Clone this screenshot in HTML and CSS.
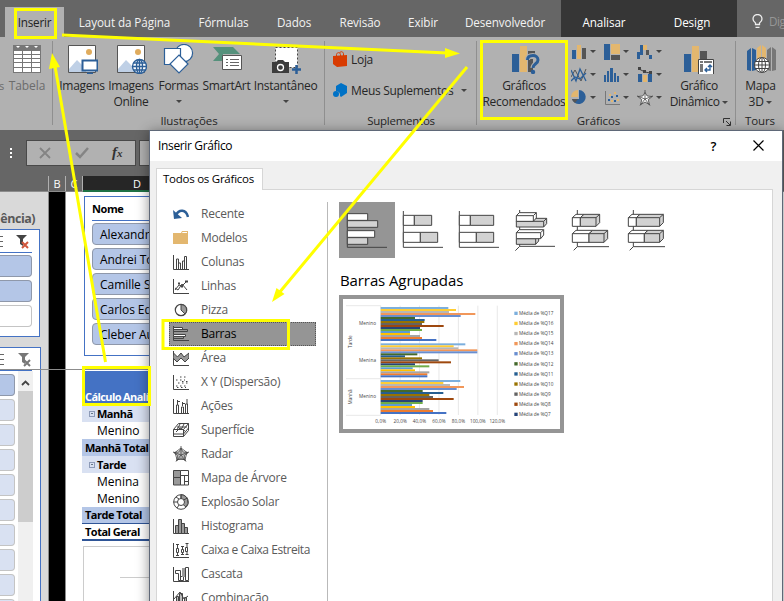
FILE: index.html
```
<!DOCTYPE html>
<html lang="pt-BR">
<head>
<meta charset="utf-8">
<title>Inserir Gráfico</title>
<link rel="stylesheet" href="styles.css">
</head>
<body>
<div class="app">
  <nav class="tabs">
    <span class="tab active">Inserir</span>
    <span class="tab t-layout">Layout da Página</span>
    <span class="tab t-form">Fórmulas</span>
    <span class="tab t-dados">Dados</span>
    <span class="tab t-rev">Revisão</span>
    <span class="tab t-exibir">Exibir</span>
    <span class="tab t-dev">Desenvolvedor</span>
    <span class="tab ctx t-anal">Analisar</span>
    <span class="tab ctx t-design">Design</span>
    <span class="tell"><svg width="11" height="15" viewBox="0 0 11 15" fill="none" stroke="#eee" stroke-width="1.3"><path d="M3.5 10.5V9C2 8 1 6.800 1 5a4.500 4.500 0 0 1 9 0c0 1.800-1 3-2.500 4v1.500zM3.500 13.300h4"/></svg><span>Dig</span></span>
  </nav>

  <section class="ribbon">
    <div class="group g-tab">
      <div class="tools">
        <span class="cut">s</span>
        <div class="big w-tabela dim"><svg width="30" height="30" viewBox="0 0 30 30"><path fill="#777" d="M1 1h28v28H1z"/><path fill="#fff" d="M2 7h8v3H2zm9 0h8v3h-8zm9 0h8v3h-8zM2 11h8v3H2zm9 0h8v3h-8zm9 0h8v3h-8zM2 15h8v3H2zm9 0h8v3h-8zm9 0h8v3h-8zM2 19h8v4H2zm9 0h8v4h-8zm9 0h8v4h-8zM2 24h8v4H2zm9 0h8v4h-8zm9 0h8v4h-8zM4 2h4L6 4zm9 0h4l-2 2zm9 0h4l-2 2z"/></svg><span>Tabela</span></div>
      </div>
      <div class="glabel"></div>
    </div>
    <div class="group g-ilus">
      <div class="tools">
        <div class="big w-img"><svg width="32" height="30" viewBox="0 0 32 30"><path d="M2.500 1.500h27v27h-27z" fill="#fff" stroke="#555"/><path fill="#bfd0e6" d="M3 25l8-9 9 9v3H3z"/><circle cx="23" cy="8" r="3" fill="#e0ac5d"/><path d="M16.500 16.500h15v10h-15z" fill="#fff" stroke="#2c5f98" stroke-width="2"/><path stroke="#2c5f98" stroke-width="2" d="M21 29.500h6"/></svg><span>Imagens</span></div>
        <div class="big w-online"><svg width="32" height="30" viewBox="0 0 32 30"><path d="M2.500 1.500h27v27h-27z" fill="#fff" stroke="#555"/><path fill="#bfd0e6" d="M3 25l8-9 9 9v3H3z"/><circle cx="23" cy="8" r="3" fill="#e0ac5d"/><g fill="#fff" stroke="#2c5f98" stroke-width="1.400"><circle cx="24.500" cy="22.500" r="7"/><ellipse cx="24.500" cy="22.500" rx="3" ry="7"/><path d="M17.500 22.500h14M18.500 19h12M18.500 26h12M24.500 15.500v14"/></g></svg><span>Imagens</span><span>Online</span></div>
        <div class="big w-formas"><svg width="32" height="30" viewBox="0 0 32 30" fill="#fff" stroke="#2c5f98" stroke-width="1.200"><circle cx="21" cy="9" r="8.600"/><path d="M1.500 4.500h16v16h-16z"/><path d="M16 11l9 9-9 9-9-9z"/></svg><span>Formas</span><i class="dd"></i></div>
        <div class="big w-smart"><svg width="32" height="30" viewBox="0 0 32 30"><path fill="#55917c" d="M2 3h20l7 7H12v7H2l6-7z"/><path d="M11.500 11.500h19v14h-19z" fill="#fff" stroke="#555"/><path stroke="#666" d="M15 15.500h2m2 0h9M15 18.500h2m2 0h9M15 21.500h2m2 0h9"/></svg><span>SmartArt</span></div>
        <div class="big w-inst"><svg width="32" height="30" viewBox="0 0 32 30"><path d="M5.500 3.500h22v20h-22z" fill="#fff" stroke="#444" stroke-dasharray="2 2"/><path fill="#3c3c3c" d="M2 18h4l2-2h5l2 2h4v11H2z"/><circle cx="10.500" cy="23.500" r="3" fill="#3c3c3c" stroke="#fff" stroke-width="1.300"/><path stroke="#2c5f98" stroke-width="2.500" d="M22 25.500h9M26.500 21v9"/></svg><span>Instantâneo</span><i class="dd"></i></div>
      </div>
      <div class="glabel">Ilustrações</div>
    </div>
    <div class="group g-sup">
      <div class="rows">
        <div class="line"><svg width="15" height="17" viewBox="0 0 15 17"><path fill="#d83b01" d="M0 5l14-1v11l-10 1-4-3z"/><path d="M3.500 6V3.500C4 1 7 1 7.500 3.500V6M6.500 2C8-.5 10.500 1 10.500 3v2" fill="none" stroke="#d83b01"/></svg><span>Loja</span></div>
        <div class="line"><svg width="15" height="17" viewBox="0 0 15 17"><path fill="#0072c6" d="M3 4l5-3 6 3v7l-6 4-1-1a4 4 0 0 0-4-5z"/><circle cx="3" cy="12" r="3" fill="#0072c6"/></svg><span>Meus Suplementos</span><i class="dd"></i></div>
      </div>
      <div class="glabel">Suplementos</div>
    </div>
    <div class="group g-graf">
      <div class="tools">
        <div class="big w-rec"><svg width="32" height="30" viewBox="0 0 32 30"><path fill="#2c5f98" d="M4 10h7v18H4z"/><path fill="#e3b76f" d="M12 2h7v26h-7z"/><path fill="#555" d="M20 7h7v5h-7zm0 8h5v13h-5z"/><path d="M19.500 16c0-4 3-4.500 5.500-4.500s5 1.500 5 4.500c0 4-5 3.500-5 8" fill="none" stroke="#b1b1b1" stroke-width="5"/><path d="M19.500 16c0-4 3-4.500 5.500-4.500s5 1.500 5 4.500c0 4-5 3.500-5 8" fill="none" stroke="#2c5f98" stroke-width="3"/><circle cx="25" cy="28" r="2.200" fill="#2c5f98"/></svg><span>Gráficos</span><span>Recomendados</span></div>
        <div class="minis">
          <div><svg width="16" height="16" viewBox="0 0 16 16"><path fill="#2c5f98" d="M1 6h4v9H1z"/><path fill="#e3b76f" d="M6 1h4v14H6z"/><path fill="#555" d="M11 4h4v11h-4z"/></svg><i class="dd"></i></div>
          <div><svg width="16" height="16" viewBox="0 0 16 16"><path fill="#2c5f98" d="M0 0h6v16H0z"/><path fill="#e3b76f" d="M7 0h9v10H7z"/><path fill="#555" d="M7 11h9v5H7z"/></svg><i class="dd"></i></div>
          <div><svg width="16" height="16" viewBox="0 0 16 16"><path fill="#2c5f98" d="M0 8h3v7H0zM3 1h3v10H3zm9 10h3v4h-3z"/><path fill="#e3b76f" d="M6 1h4v5H6z"/><path fill="#555" d="M9 6h3v5H9z"/></svg><i class="dd"></i></div>
          <div><svg width="16" height="16" viewBox="0 0 16 16" fill="none"><path stroke="#555" d="M0 10l4-7 6 11 5-12"/><path stroke="#2c5f98" stroke-width="1.300" d="M0 3l5 11L9 2l6 12M0 14l4-4 5 2 6-6"/></svg><i class="dd"></i></div>
          <div><svg width="16" height="16" viewBox="0 0 16 16"><path fill="#2c5f98" d="M0 8h2v7H0zm3-4h2v11H3zm3-3h3v14H6zm4 5h2v9h-2zm3 3h2v6h-2z"/></svg><i class="dd"></i></div>
          <div><svg width="16" height="16" viewBox="0 0 16 16"><path fill="#2c5f98" d="M1 7h4v8H1zm10 0h4v8h-4z"/><path fill="#e3b76f" d="M6 8h4v7H6z"/><path d="M2 2l6 3 5 1" fill="none" stroke="#444"/><path fill="#444" d="M1 0h3v3H1zm5 3h3v3H6zm6 1h3v3h-3z"/></svg><i class="dd"></i></div>
          <div><svg width="16" height="16" viewBox="0 0 16 16"><path fill="#2c5f98" d="M8 0a7 7 0 1 1-7 9h7z"/><path fill="#e3b76f" d="M7 0v7H0a7 7 0 0 1 7-7z"/><path fill="#555" d="M1 9h6l-3 4a6 6 0 0 1-3-4z"/></svg><i class="dd"></i></div>
          <div><svg width="16" height="16" viewBox="0 0 16 16"><path d="M1.500 1v13.500H16" fill="none" stroke="#777"/><path fill="#2c5f98" d="M4 9h2v2H4zm3-3h2v2H7zm3 4h2v2h-2zm2-5h2v2h-2z"/><path fill="#e3b76f" d="M5 4h2v2H5zm5-2h2v2h-2zm-3 8h2v2H7zm6-1h2v2h-2z"/></svg><i class="dd"></i></div>
          <div><svg width="16" height="16" viewBox="0 0 16 16" fill="none" stroke="#444" stroke-width=".8"><path fill="#fff" d="M8 2.500l2.200 3.500 5 .5-4 3.200 1.300 5L8 12l-4.500 2.700 1.300-5-4-3.200 5-.5z"/><path d="M8 0v9M0 6l8 3 8-3M3 15.500L8 9l5 6.500"/></svg><i class="dd"></i></div>
        </div>
        <div class="big w-din"><svg width="32" height="30" viewBox="0 0 32 30"><path fill="#2c5f98" d="M1 10h7v18H1z"/><path fill="#e3b76f" d="M9 2h7v26H9z"/><path fill="#555" d="M17 7h7v8h-7z"/><path d="M15.500 15.500h15v15h-15z" fill="#fff" stroke="#444"/><path fill="#777" d="M17 17h3v2h-3zm4 0h8v2h-8zm-4 3h3v8h-3z"/><path d="M22 26h5v-5M24 24l-2 2 2 2M25 23l2-2 2 2" fill="none" stroke="#2c5f98" stroke-width="1.400"/></svg><span>Gráfico</span><span>Dinâmico <i class="dd"></i></span></div>
      </div>
      <div class="glabel"><span>Gráficos</span><svg class="launch" width="8" height="8" viewBox="0 0 8 8" fill="none" stroke="#333"><path d="M.5 5V.5H7M3 3l4 4M7.500 3.500v4h-4"/></svg></div>
    </div>
    <div class="group g-tour">
      <div class="tools"><div class="big w-mapa"><svg width="32" height="30" viewBox="0 0 32 30"><path fill="#2c5f98" d="M2 7l4-3v23l-4-1zm5-3l4 2v20l-4 1z"/><path fill="#e3b76f" d="M12 4l4-3v25h-4zm5-3l4 3v22h-4z"/><path fill="#777" d="M22 6l4-3v24l-4-1zm5-3l4 3v20l-4 1z"/><g fill="#fff" stroke="#444"><circle cx="17" cy="21" r="7.500"/><ellipse cx="17" cy="21" rx="3.500" ry="7.500"/><path d="M9.500 21h15M11 17.500h12M11 24.500h12M17 13.500v15"/></g></svg><span>Mapa</span><span>3D <i class="dd"></i></span></div></div>
      <div class="glabel">Tours</div>
    </div>
  </section>

  <section class="fbar">
    <span class="dots"><b></b><b></b><b></b></span>
    <div class="fbox"><svg width="12" height="12" viewBox="0 0 12 12" stroke="#848484" stroke-width="1.800"><path d="M1 1l10 10M11 1L1 11"/></svg><svg width="14" height="12" viewBox="0 0 14 12" fill="none" stroke="#848484" stroke-width="2.500"><path d="M1 6l4 4 8-9"/></svg><span class="fx">f<small>x</small></span></div>
    <div class="fin"></div>
  </section>
  <div class="cols"><span class="ca"></span><span class="cb">B</span><span class="cc">C</span><span class="cd">D</span></div>

  <main class="sheet">
    <aside class="left">
      <div class="cap">ência)</div>
      <div class="slicer s1">
        <div class="shead"><svg width="32" height="18" viewBox="0 0 32 18"><path stroke="#666" d="M0 4.500h3M0 9.500h3M0 14.500h3"/><path fill="#444" d="M16 3h11l-4 4v7l-3-2V7z"/><path stroke="#d0563c" stroke-width="2" d="M22 10l6 6M28 10l-6 6"/></svg></div>
        <div class="pill"></div><div class="pill"></div><div class="pill off"></div>
      </div>
      <div class="slicer s2">
        <div class="shead"><svg width="32" height="18" viewBox="0 0 32 18"><path stroke="#666" d="M0 4.500h4M0 9.500h4M0 14.500h4"/><path fill="#777" d="M18 3h11l-4 4v7l-3-2V7z"/><path stroke="#777" stroke-width="2" d="M24 10l6 6M30 10l-6 6"/></svg></div>
        <div class="sbody">
          <div class="pills"><div class="pill"></div><div class="pill lt"></div><div class="pill lt"></div><div class="pill lt"></div><div class="pill lt"></div><div class="pill lt"></div><div class="pill lt"></div><div class="pill lt"></div><div class="pill lt"></div><div class="pill lt"></div></div>
          <div class="scroll"><svg width="9" height="6" viewBox="0 0 9 6" fill="none" stroke="#444" stroke-width="1.800"><path d="M1 5l3.500-3.500L8 5"/></svg><div class="thumb"></div></div>
        </div>
      </div>
    </aside>
    <div class="black"></div>
    <div class="blank"></div>
    <div class="dcol">
      <div class="names"><div class="nh">Nome</div><div class="np">Alexandre</div><div class="np">Andrei Tom</div><div class="np">Camille Sa</div><div class="np">Carlos Edu</div><div class="np">Cleber Aug</div></div>
      <div class="pivot">
        <div class="ph">Cálculo Analítico</div>
        <div class="pr sub"><i class="minus"></i>Manhã</div>
        <div class="pr in">Menino</div>
        <div class="pr tot">Manhã Total</div>
        <div class="pr sub"><i class="minus"></i>Tarde</div>
        <div class="pr in">Menina</div>
        <div class="pr in">Menino</div>
        <div class="pr tot ul">Tarde Total</div>
        <div class="pr gt">Total Geral</div>
      </div>
      <div class="obj"><div></div></div>
    </div>
  </main>

  <div class="freeze"></div>

  <section class="dialog">
    <header><span>Inserir Gráfico</span><span class="q">?</span><svg width="11" height="11" viewBox="0 0 11 11" stroke="#000" stroke-width="1.200"><path d="M.5.5l10 10M10.500.5l-10 10"/></svg></header>
    <div class="dbody">
      <div class="dtab">Todos os Gráficos</div>
      <div class="panel">
        <ul class="list">
          <li><svg viewBox="0 0 16 16"><path d="M3 9c3-6 10-6 12 2" fill="none" stroke="#2c5f98" stroke-width="2.500"/><path fill="#2c5f98" d="M0 4l1 9 8-1z"/></svg>Recente</li>
          <li><svg viewBox="0 0 16 16"><path fill="#e3b76f" d="M0 3h8l1-2h6v13H0z"/><path fill="#fff" d="M9.500 2H14v1H9z"/></svg>Modelos</li>
          <li><svg viewBox="0 0 16 16" class="ic"><path d="M.5 1v14.500H16M3.500 15V5h2v10M5.500 15V9h2v6M9.500 15V7h2v8M11.500 15V2.500h2V15"/></svg>Colunas</li>
          <li><svg viewBox="0 0 16 16" class="ic"><path d="M.5 1v14.500H16M2 12l4-5 3 1 5-5M2 10l3 2 4-6 5 6"/><path d="M5 5.500h2M8 8.500h2M12 3.500h3" stroke-width="2"/></svg>Linhas</li>
          <li><svg viewBox="0 0 16 16"><circle cx="8" cy="8" r="5.700" fill="#fff" stroke="#444" stroke-width="1.200"/><path fill="#999" stroke="#444" d="M8 2.500a5.500 5.500 0 0 1 4 9.500L8 8z"/></svg>Pizza</li>
          <li class="sel"><svg viewBox="0 0 16 16" class="ic"><path d="M.5 0v14.500H16"/><path fill="#fff" d="M.5 1.500h9v2h-9z"/><path d="M.5 3.500h14v2H.5zM.5 10.500h10v2H.5z"/><path fill="#fff" d="M.5 8.500h12v2H.5z"/></svg>Barras</li>
          <li><svg viewBox="0 0 16 16" class="ic"><path d="M.5 1v14.500H16"/><path fill="#999" d="M.5 3l4 4L8 3l3 4 5-4v5l-4 4-4-4-4 4-4-4z"/></svg>Área</li>
          <li><svg viewBox="0 0 16 16" class="ic"><path d="M.5 1v14.500H16"/><path stroke-dasharray="1.500 2.500" d="M3 12h11M5 9h10M3 6h9M7 3h8M4 13.500h9M9 7.500h6"/></svg>X Y (Dispersão)</li>
          <li><svg viewBox="0 0 16 16" class="ic"><path d="M.5 1v14.500H16M3.500 15V7h2v8M8.500 15V9h2v6M12.500 15V6h2v9M4.500 2v5M9.500 4v4M14 1v5M4.500 3.500H7M9.500 5.500H12"/></svg>Ações</li>
          <li><svg viewBox="0 0 16 16" class="ic"><path fill="#fff" d="M5.500 1.500h10v7l-5 6H.5v-7z"/><path d="M.5 7.500h10l5-6M10.500 7.500v7M4 5h10M7 2L4 8M11 2L8 8M.5 12h10l5-6M3 10l4-4 5 3"/></svg>Superfície</li>
          <li><svg viewBox="0 0 16 16" class="ic thin"><path fill="#bbb" d="M8 2.500l2.200 3.500 5 .5-4 3.200 1.300 5L8 12l-4.500 2.700 1.300-5-4-3.200 5-.5z"/><path d="M8 0v9M0 6l8 3 8-3M3 15.500L8 9l5 6.500M8 2L2 6.500l2 7h8l2-7z"/></svg>Radar</li>
          <li><svg viewBox="0 0 16 16" class="ic"><path fill="#999" d="M.5.5h7v7h-7zM.5 7.500h7v7.500h-7z"/><path fill="#fff" d="M7.500.5h8v5h-8zM7.500 5.500h4V15h-4zM11.500 5.500h4v6h-4zM11.500 11.500h4V15h-4z"/></svg>Mapa de Árvore</li>
          <li><svg viewBox="0 0 16 16" class="ic"><circle cx="8" cy="8" r="7.300" fill="#fff"/><path fill="#999" d="M8 .7A7.300 7.300 0 0 1 13 13L9.500 10A3 3 0 0 0 8 5z"/><circle cx="8" cy="8" r="3.500" fill="#fff"/><path d="M4.500 8h-4M6 11l-2 3M8 4.500V1M3 3l3 2M10.500 6l4-2"/></svg>Explosão Solar</li>
          <li><svg viewBox="0 0 16 16" class="ic"><path d="M.5 1v14.500H16"/><path fill="#999" d="M2.500 7.500h3v8h-3zM5.500 1.500h3v14h-3zM8.500 5.500h3v10h-3zM11.500 9.500h3v6h-3z"/></svg>Histograma</li>
          <li><svg viewBox="0 0 16 16" class="ic"><path d="M.5 1v14.500H16M4.500 2v12M9.500 4v9M14 1v12M3 2.500h3M8 4.500h3M12.500 1.500h3M3 13.500h3M8 12.500h3M12.500 12.500h3"/><path fill="#fff" d="M3.500 6.500h2v4h-2zM8.500 7.500h2v3h-2zM12.500 5.500h2v4h-2z"/></svg><span class="tight">Caixa e Caixa Estreita</span></li>
          <li><svg viewBox="0 0 16 16" class="ic"><path d="M.5 1v14.500H16"/><path d="M2.500 4.500h5v10h-2v-7h-3zM7.500 10.500h3v4h-3zM12.500 1.500h3v13h-3z"/><path fill="#999" stroke="none" d="M9 2h3v9H9z"/></svg>Cascata</li>
          <li><svg viewBox="0 0 16 16" class="ic"><path d="M.5 1v14.500H16"/><path fill="#bbb" d="M3.500 6.500h2v9h-2zM6.500 3.500h3v12h-3zM11.500 7.500h2v8h-2z"/><path d="M1 9l6-7 4 7 4-3"/></svg>Combinação</li>
        </ul>
        <div class="content">
          <div class="thumbs">
            <div class="on"><svg viewBox="0 0 168 168"><path d="M25 33v103h119"/><path class="w" d="M25 35h61v20H25zM25 86h82v20H25z"/><path class="g" d="M25 56h91v20H25zM25 107h61v20H25z"/></svg></div>
            <div><svg viewBox="0 0 168 168"><path d="M25 27v109h119"/><path class="w" d="M25 40h33v30H25zM25 91h51v30H25z"/><path class="g" d="M58 40h52v30H58zM76 91h52v30H76z"/></svg></div>
            <div><svg viewBox="0 0 168 168"><path d="M25 27v109h119"/><path class="w" d="M25 40h33v30H25zM25 91h51v30H25z"/><path class="g" d="M58 40h70v30H58zM76 91h52v30H76z"/></svg></div>
            <div><svg viewBox="0 0 168 168"><path d="M38 24v109h106M38 133l-13 13"/><path class="g" d="M28 58l9-9h82v16l-9 10H28zM110 58l9-9M28 58h82v17M28 110l9-9h58v16l-9 10H28zM28 110h58v17M86 110l9-9"/><path class="w" d="M28 41l9-9h51v16l-9 10H28zM28 41h51v17M79 41l9-9M28 92l9-9h73v16l-9 11H28zM28 92h73v18M101 92l9-9"/></svg></div>
            <div><svg viewBox="0 0 168 168"><path d="M43 24v110h95M43 134l-11 11"/><path class="w" d="M28 47l11-10h24L52 47v26H28zM28 47h24M28 95l11-10h50L78 95v26H28zM28 95h50"/><path class="g" d="M52 47l11-10h47v25l-11 11H52zM52 47h47v26M99 47l11-10M78 95l11-10h45v25l-11 11H78zM78 95h45v26M123 95l11-10"/></svg></div>
            <div><svg viewBox="0 0 168 168"><path d="M43 24v110h95M43 134l-11 11"/><path class="w" d="M28 47l11-10h24L52 47v26H28zM28 47h24M28 95l11-10h48L76 95v26H28zM28 95h48"/><path class="g" d="M52 47l11-10h70v25l-11 11H52zM52 47h70v26M122 47l11-10M76 95l11-10h46v25l-11 11H76zM76 95h46v26M122 95l11-10"/></svg></div>
          </div>
          <h2>Barras Agrupadas</h2>
          <div class="preview"><svg id="chart" width="217" height="130" viewBox="39 102 651 390"></svg></div>
        </div>
      </div>
    </div>
  </section>

  <svg class="marks" width="784" height="601" viewBox="0 0 784 601" fill="none" stroke="#ff0" stroke-width="3">
    <path d="M15.500 9.500h40v28h-40zM481.500 41.500h85v77h-85zM163 320.500h125.500v28H163zM83.500 367.500h66v37h-66z"/>
    <path d="M62 35L447 53M467 67L279 293M105.500 362L55 66"/>
    <path fill="#ff0" stroke="none" d="M460 53.500l-15 4.500V48zM272 302l4.500-14 8 6zM52 53l8 14-11 2z"/>
  </svg>
</div>
<script src="chart.js"></script>
</body>
</html>
```
FILE: styles.css
```
* { box-sizing: border-box; }
body { margin: 0; font: 12px/16px "Open Sans", "Noto Sans", sans-serif; color: #262626; }
.app { position: relative; width: 784px; height: 601px; overflow: hidden; background: #666; display: flex; flex-direction: column; }
svg { display: block; flex: none; }
.tabs { height: 37px; flex: none; display: flex; align-items: flex-end; background: #666; color: #f2f2f2; padding-left: 5px; font-size: 11.7px; letter-spacing: -.1px; white-space: nowrap; }
.tab { height: 30px; line-height: 30px; text-align: center; flex: none; }
.active { width: 59px; background: #b1b1b1; color: #222; letter-spacing: -.2px; }
.t-layout { width: 121px; }
.t-form { width: 77px; }
.t-dados { width: 64px; }
.t-rev { width: 68px; }
.t-exibir { width: 58px; }
.t-dev { width: 109px; padding-right: 3px; }
.ctx { height: 37px; padding-top: 7px; background: #363636; color: #fff; }
.t-anal { width: 86px; }
.t-design { width: 90px; }
.tell { display: flex; align-items: center; gap: 6px; height: 30px; padding: 0 0 2px 15px; color: #969696; width: 47px; overflow: hidden; letter-spacing: -.5px; }
.ribbon { height: 93px; flex: none; background: #b1b1b1; display: flex; }
.group { height: 93px; flex: none; display: flex; flex-direction: column; background: linear-gradient(#8f8f8f, #8f8f8f) right 4px / 1px 84px no-repeat; white-space: nowrap; letter-spacing: -.3px; }
.g-tab { width: 53px; }
.g-ilus { width: 272px; }
.g-sup { width: 152px; }
.g-graf { width: 259px; }
.g-tour { width: 48px; background: none; }
.tools, .rows { height: 76px; display: flex; }
.glabel { height: 17px; line-height: 16px; display: flex; justify-content: center; position: relative; font-size: 11.5px; letter-spacing: -.1px; }
.g-sup .glabel { letter-spacing: -.25px; }
.launch { position: absolute; right: 5px; top: 5px; }
.g-graf .glabel { padding-right: 16px; }
.big { display: flex; flex-direction: column; align-items: center; padding-top: 7px; flex: none; }
.big > svg { margin-bottom: 4px; }
.big span { line-height: 16px; }
.dim { color: #6c6c6c; letter-spacing: -.1px; }
.cut { width: 4px; padding-top: 41px; color: #6c6c6c; direction: rtl; font-size: 11px; }
.w-tabela { width: 46px; }
.g-ilus .tools { padding-left: 5px; }
.w-img { width: 48px; }
.w-online { width: 50px; }
.w-formas { width: 45px; }
.w-smart { width: 51px; }
.w-inst { width: 67px; }
.w-rec { width: 94px; }
.w-din { width: 58px; letter-spacing: -.4px; }
.w-mapa { width: 49px; }
.dd { display: inline-block; width: 0; height: 0; border: 3px solid transparent; border-top-color: #444; border-bottom: 0; vertical-align: 2px; flex: none; }
.big > .dd { margin-top: 6px; }
.rows { flex-direction: column; padding: 7px 0 0 8px; }
.line { height: 31px; display: flex; align-items: center; gap: 3px; }
.line .dd { margin-left: 5px; }
.minis { display: grid; grid-template-columns: repeat(3, 33px); grid-template-rows: repeat(3, 23px); padding-top: 3px; width: 99px; }
.minis div { display: flex; align-items: center; gap: 3px; }
.fbar { height: 46px; flex: none; display: flex; align-items: flex-start; padding-top: 10px; }
.dots { width: 26px; display: flex; flex-direction: column; gap: 2px; padding: 8px 0 0 10px; }
.dots b { width: 2px; height: 2px; background: #fff; }
.fbox { width: 110px; height: 26px; background: #b1b1b1; border: 1px solid #494949; display: flex; align-items: center; padding-left: 12px; gap: 24px; }
.fx { font: italic bold 15px "Liberation Serif", serif; color: #333; margin: -2px 0 0 -1px; }
.fx small { font-size: 11px; }
.fin { width: 100px; height: 26px; margin-left: 3px; background: #b1b1b1; border: 1px solid #494949; }
.cols { height: 16px; flex: none; display: flex; color: #fff; line-height: 15px; text-align: center; border-bottom: 1px solid #8c8c8c; font-size: 11px; }
.cols span { border-right: 1px solid #b0b0b0; flex: none; }
.ca { width: 49px; }
.cb { width: 17px; }
.cc { width: 17px; }
.cols .cd { width: 109px; height: 16px; background: #262626; border-bottom: 2px solid #1f7245; }
.sheet { flex: 1; display: flex; background: #fff; min-height: 0; }
.left { width: 49px; flex: none; background: #d9d9d9; border-right: 1px solid #8c8c8c; overflow: hidden; }
.cap { height: 37px; padding-top: 18px; font-weight: bold; font-size: 12.5px; line-height: 18px; color: #595959; width: 35px; display: flex; justify-content: flex-end; white-space: nowrap; letter-spacing: -.5px; }
.slicer { background: #fff; border: 1px solid #4472c4; border-left: 0; }
.s1 { width: 40px; height: 108px; }
.shead { width: 32px; height: 23px; border-bottom: 1px solid #4472c4; padding-top: 2px; }
.s1 .pill { width: 32px; }
.pill { height: 22px; margin: 2px 0 3px; border: 1px solid #8f98aa; border-left: 0; border-radius: 0 4px 4px 0; background: #b4c6e7; }
.pill.off { background: #fff; border-color: #c4c4c4; }
.pill.lt { background: #d9e1f2; border-color: #c4c4c4; }
.s2 { width: 41px; height: 300px; margin-top: 10px; }
.sbody { display: flex; }
.pills { width: 15px; padding-top: 1px; }
.scroll { width: 15px; margin-left: 3px; background: #f0f0f0; display: flex; flex-direction: column; align-items: center; padding-top: 9px; }
.thumb { width: 15px; height: 131px; margin-top: 5px; background: #cdcdcd; flex: none; }
.black { width: 17px; flex: none; background: #000; border-right: 1px solid #8c8c8c; }
.blank { width: 16px; flex: none; }
.dcol { width: 110px; flex: none; white-space: nowrap; color: #000; }
.names { margin: 4px 0 0 2px; height: 160px; border: 1px solid #4472c4; padding-left: 7px; }
.nh { height: 24px; line-height: 23px; font-weight: bold; font-size: 11px; border-bottom: 1px solid #4472c4; margin-bottom: 2px; letter-spacing: -.4px; }
.np { height: 22px; line-height: 21px; margin-bottom: 3px; border: 1px solid #8f98aa; border-radius: 4px; background: #b4c6e7; padding-left: 7px; letter-spacing: -.05px; }
.pivot { margin-top: 15px; font-size: 11px; font-weight: bold; letter-spacing: -.5px; }
.ph { height: 34px; background: #4472c4; color: #fff; padding: 17px 0 0 3px; line-height: 17px; letter-spacing: -.6px; }
.pr { height: 17px; line-height: 16px; padding-left: 3px; display: flex; align-items: center; }
.sub { background: #d9e1f2; padding-left: 7px; }
.in { font-weight: normal; padding-left: 15px; letter-spacing: 0; font-size: 12px; }
.tot { background: #b4c6e7; }
.ul { border-bottom: 1px solid #2f5597; }
.gt { border-bottom: 2px solid #2f5597; }
.minus { width: 6px; height: 6px; border: 1px solid #8d9bb8; margin-right: 2px; background: linear-gradient(#678, #678) center / 2px 1px no-repeat; }
.obj { margin: 5px 0 0 1px; height: 70px; border: 1px solid #ccc; padding: 30px 0 0 36px; }
.obj div { border-top: 1px solid #ccc; }
.freeze { position: absolute; left: 0; top: 369px; width: 150px; height: 1px; background: #8c8c8c; }
.dialog { position: absolute; left: 149px; top: 130px; width: 634px; height: 486px; background: #f0f0f0; border: 1px solid #5f6878; border-width: 1px 1px 0; box-shadow: 0 2px 12px rgba(0, 0, 0, .45); display: flex; flex-direction: column; color: #000; }
.dialog header { height: 30px; flex: none; background: #fff; display: flex; align-items: center; padding: 0 18px 1px 8px; letter-spacing: -.35px; }
.q { margin-left: auto; margin-right: 37px; font-size: 13px; font-weight: 600; }
.dbody { padding: 7px 9px 0 6px; flex: 1; display: flex; flex-direction: column; }
.dtab { width: 107px; height: 22px; line-height: 20px; margin-bottom: -1px; position: relative; z-index: 1; background: #fff; border: 1px solid #d6d6d6; border-bottom: 0; padding-left: 6px; font-size: 11.5px; letter-spacing: -.25px; white-space: nowrap; }
.panel { flex: 1; background: #fff; border: 1px solid #d6d6d6; display: flex; padding-top: 12px; }
.list { list-style: none; margin: 0; padding: 0 11px 0 12px; width: 171px; flex: none; border-right: 1px solid #b9b9b9; font-size: 12px; letter-spacing: -.25px; color: #5a5a5a; }
.list li { height: 24px; display: flex; align-items: center; gap: 12px; padding-left: 4px; white-space: nowrap; }
.tight { letter-spacing: -.45px; }
.list svg { width: 16px; height: 16px; }
.list .sel { background: #959595; color: #000; outline: 1px dotted #555; outline-offset: -1px; }
.ic { fill: none; stroke: #444; stroke-width: 1; }
.thin { stroke-width: .8; }
.content { padding-left: 11px; }
.thumbs { display: flex; height: 56px; }
.thumbs svg { width: 56px; height: 56px; fill: none; stroke: #444; stroke-width: 3; }
.on { background: #959595; }
.w { fill: #fff; }
.g { fill: #d2d2d2; }
h2 { margin: 11px 0 4px 1px; font-size: 15px; line-height: 22px; font-weight: normal; letter-spacing: -.1px; }
.preview { width: 225px; height: 138px; border: 4px solid #959595; background: #fff; }
.marks { position: absolute; left: 0; top: 0; }
.clabel { font: 14px "Open Sans", sans-serif; fill: #444; }
```
FILE: chart.js
```
var NS = 'http://www.w3.org/2000/svg';
var chart = document.getElementById('chart');
var colors = ['#7cafdd', '#ffcd33', '#b7b7b7', '#f1975a', '#698ed0', '#43682b', '#255e91', '#997300', '#636363', '#9e480e', '#264478', '#70ad47', '#5b9bd5', '#ffc000', '#a5a5a5', '#ed7d31', '#4472c4'];
var groups = [
  { y: 126, ends: [355, 378, 357, 436, 392, 255, 284, 283, 276, 341, 270, 276, 240, 240, 270, 276, 319] },
  { y: 235, ends: [406, 371, 385, 442, 442, 262, 225, 276, 326, 363, 255, 298, 248, 255, 298, 292, 292] },
  { y: 345, ends: [391, 340, 360, 402, 380, 278, 340, 298, 309, 371, 278, 278, 246, 255, 298, 309, 349] }
];
function add(tag, attrs, text) {
  var el = document.createElementNS(NS, tag);
  for (var k in attrs) el.setAttribute(k, attrs[k]);
  if (text) el.textContent = text;
  chart.appendChild(el);
}
for (var i = 0; i <= 6; i++) {
  var x = 152 + i * 58.3;
  add('path', { d: 'M' + x + ' 122V450', stroke: '#ddd', 'stroke-width': 2 });
  add('text', { x: x, y: 473, 'text-anchor': 'middle', 'class': 'clabel', textLength: i ? (i > 4 ? 47 : 40) : 33 }, i * 20 + ',0%');
}
add('path', { d: 'M48 122H152M48 341H152M48 451H152', stroke: '#ddd', 'stroke-width': 2 });
groups.forEach(function (g) {
  g.ends.forEach(function (end, n) {
    add('rect', { x: 152, y: g.y + n * 6, width: end - 152, height: 6, fill: colors[n] });
  });
});
[['Menino', 180], ['Menina', 291], ['Menino', 398]].forEach(function (c) {
  add('text', { x: 138, y: c[1], 'text-anchor': 'end', 'class': 'clabel', textLength: 51 }, c[0]);
});
add('text', { transform: 'translate(65 230) rotate(-90)', 'text-anchor': 'middle', 'class': 'clabel' }, 'Tarde');
add('text', { transform: 'translate(65 396) rotate(-90)', 'text-anchor': 'middle', 'class': 'clabel' }, 'Manhã');
for (var n = 0; n < 11; n++) {
  var y = 145 + n * 30.3;
  add('rect', { x: 553, y: y - 5, width: 10, height: 10, fill: colors[n] });
  add('text', { x: 567, y: y + 5, 'class': 'clabel', textLength: n > 7 ? 95 : 103, lengthAdjust: 'spacingAndGlyphs' }, 'Média de %Q' + (17 - n));
}
```
